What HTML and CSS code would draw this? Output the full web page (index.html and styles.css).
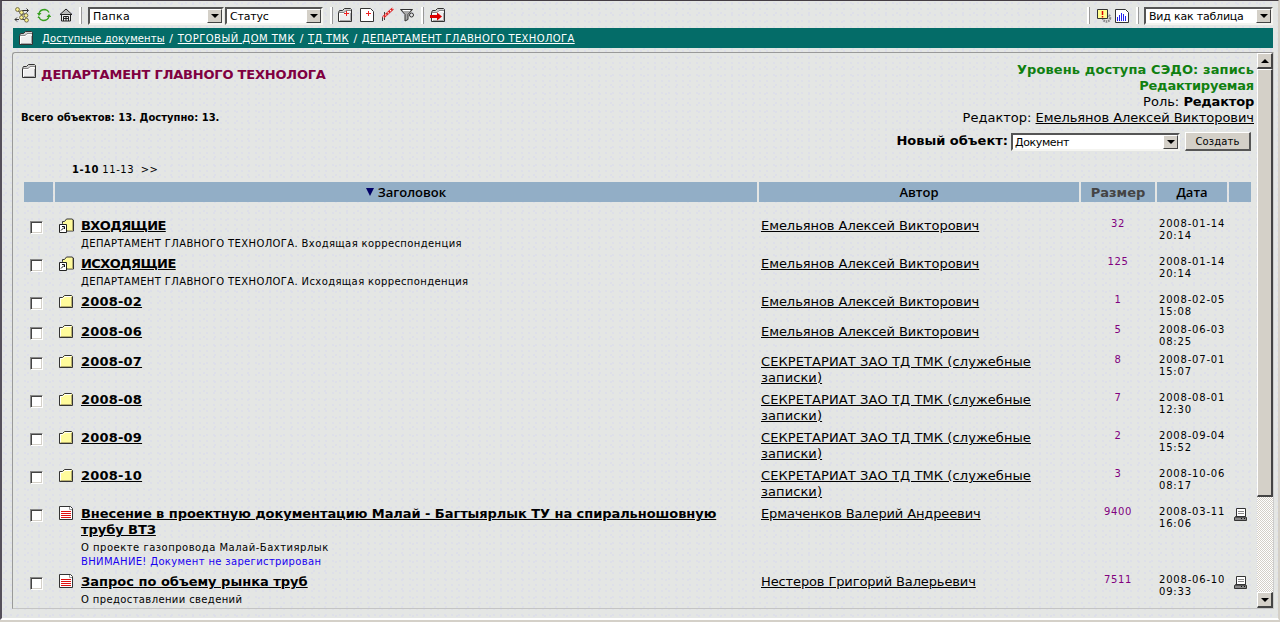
FILE: index.html
```html
<!DOCTYPE html>
<html lang="ru">
<head>
<meta charset="utf-8">
<title>ДЕПАРТАМЕНТ ГЛАВНОГО ТЕХНОЛОГА</title>
<link rel="stylesheet" href="styles.css">
</head>
<body>
<svg class="defs" width="0" height="0">
  <symbol id="folder" viewBox="0 0 15 15"><path d="M.5 3.500h3l2-2h7l1 1v11H.5z" fill="#fffb9c" stroke="#333"/><path d="M1.500 12.500v-8h2.500l2-2h6" fill="none" stroke="#fff"/><path d="M12.500 3v9.500h-11" fill="none" stroke="#b8b070"/></symbol>
  <symbol id="gfolder" viewBox="0 0 15 15"><path d="M.5 4.500l1-2h3l2-2h6l1 1v12H.5z" fill="#d0d0d0" stroke="#333"/><path d="M1 5.500h5.500l2-2H13V13H1z" fill="#eee"/><path d="M1 4.500h5l2-2h5" fill="none" stroke="#888"/><path d="M1.500 12.500v-7h5l2-2h4" fill="none" stroke="#fff"/><path d="M12.500 5v7.500H2" fill="none" stroke="#aaa"/></symbol>
  <symbol id="link" viewBox="0 0 15 15"><path d="M3.500 5.500v-2h2l2-2.500h5.500l1.500 1v11H3.500z" fill="#fffb9c" stroke="#333"/><path d="M13.500 2v10.500H9" fill="none" stroke="#b8b070"/><path d="M.5 6.500h7v8h-7z" fill="#fff" stroke="#222"/><path d="M2 12.500l3-3M3 8.500h2.500V11" fill="none" stroke="#111"/></symbol>
  <symbol id="doc" viewBox="0 0 15 15"><path d="M.5.5h11l2 2v11H.5z" fill="#fff" stroke="#333"/><path d="M2 5.500h10M2 7.500h10M2 9.500h10M2 11.500h10" stroke="#e01010"/><path d="M10.500 1v2.500H13" fill="none" stroke="#999"/></symbol>
  <symbol id="printer" viewBox="0 0 14 14"><path d="M2.500.5h9v8h-9z" fill="#fff" stroke="#333"/><path d="M4 3.500h6M4 5.500h6" stroke="#888"/><path d="M.5 9.500l1-1h10l1 1v3H.5z" fill="#888" stroke="#333"/><path d="M1 9.500h11" stroke="#555"/><path d="M7 10.500h1M10 10.500h1" stroke="#111"/></symbol>
</svg>
<div class="window">
  <div class="toolbar">
    <svg class="tree" width="16" height="16" viewBox="0 0 16 16"><path d="M8 3.500h6M12.500 1.500l2 2-2 2M5 12.500H1M3 10.500l-2 2 2 2M3 3l5 4-1 5M8 7h4M7 12l6 1" fill="none" stroke="#333"/><g fill="#fcf490" stroke="#665f40" stroke-width=".9"><circle cx="3.500" cy="2.500" r="1.900"/><circle cx="7.500" cy="5.500" r="1.900"/><circle cx="12" cy="8.500" r="1.900"/><circle cx="7.500" cy="10.500" r="1.900"/><circle cx="12.500" cy="13.200" r="1.900"/></g></svg>
    <svg class="refresh" width="14" height="14" viewBox="0 0 14 14"><path d="M2 5.500Q3 1.500 8 1.500q3 .5 4 3M12 8.500Q11 12.500 6 12.500q-3-.5-4-3" fill="none" stroke="#38a020" stroke-width="1.300"/><path d="M0 5h4.500L2 8zM9.500 9L12 6l2.500 3zM.5 10l1-2 2 2" fill="#38a020"/></svg>
    <svg class="home" width="12" height="14" viewBox="0 0 12 14"><path d="M1.500 6v7h9V6" fill="#eee" stroke="#222"/><path d="M0 6.500L6 1l6 5.500z" fill="#bbb" stroke="#222"/><path d="M3.500 13V8.500h5V13M6 8v5M3 10.500h6" fill="none" stroke="#222"/></svg>
    <i class="sep sep1"></i>
    <div class="select s-folder"><span>Папка</span><b></b></div>
    <div class="select s-status"><span>Статус</span><b></b></div>
    <i class="sep sep2"></i>
    <svg class="t-add" width="15" height="15"><use href="#gfolder" width="15" height="15"/><path d="M8.500 3v5M6 5.500h5" stroke="#e22"/></svg>
    <svg class="t-doc" width="14" height="15" viewBox="0 0 14 15"><path d="M.5.5h10l3 3v10H.5z" fill="#fff" stroke="#333"/><path d="M8.500 3v5M6 5.500h5" stroke="#e22"/></svg>
    <svg class="t-pen" width="14" height="15" viewBox="0 0 14 15"><path d="M3.500 5v8M1.500 10v4" stroke="#444"/><path d="M2 10.500L12 1.500" stroke="#d22" stroke-width="2.500"/><path d="M2 10.500L12 1.500" stroke="#fff" stroke-width="1.200" stroke-dasharray="1.200 2"/></svg>
    <svg class="t-fun" width="15" height="14" viewBox="0 0 15 14"><path d="M.5.500h12l-4.500 5v5l-3 1.500V5.500z" fill="#aaa" stroke="#333"/><path d="M3 1.500h7" stroke="#fff"/><circle cx="11.500" cy="6" r="2" fill="none" stroke="#333"/></svg>
    <i class="sep sep3"></i>
    <svg class="t-go" width="16" height="15"><use href="#gfolder" x="1" width="15" height="15"/><path d="M0 7h7V4.500l5 4-5 4V10H0z" fill="#d00"/></svg>
    <i class="sep sep4"></i>
    <svg class="t-warn" width="15" height="14" viewBox="0 0 15 14"><circle cx="9.500" cy="9" r="3.500" fill="none" stroke="#888" stroke-width="2.500" stroke-dasharray="1.500 .8"/><path d="M.5.500h10v9H.5z" fill="#ffff90" stroke="#333"/><path d="M5.500 2v4M5.500 7v1.500" stroke="#d00" stroke-width="1.500"/></svg>
    <svg class="t-chart" width="14" height="14" viewBox="0 0 14 14"><path d="M.5.5h10l3 3v10H.5z" fill="#fff" stroke="#333"/><path d="M2.500 8v4M4.500 6v6M6.500 4v8M8.500 5v7M10.500 7v5" stroke="#22e"/></svg>
    <i class="sep sep5"></i>
    <div class="select s-view"><span>Вид как таблица</span><b></b></div>
  </div>
  <div class="crumbs">
    <svg width="15" height="15"><use href="#gfolder" width="15" height="15"/></svg>
    <span class="c1">Доступные документы</span><em>/</em><span class="c2">ТОРГОВЫЙ ДОМ ТМК</span><em>/</em><span class="c3">ТД ТМК</span><em>/</em><span class="c4">ДЕПАРТАМЕНТ ГЛАВНОГО ТЕХНОЛОГА</span>
  </div>
  <div class="frame">
    <div class="content">
      <div class="head">
        <div class="left">
          <h1><svg width="15" height="15"><use href="#gfolder" width="15" height="15"/></svg><span>ДЕПАРТАМЕНТ ГЛАВНОГО ТЕХНОЛОГА</span></h1>
          <div class="total">Всего объектов: 13. Доступно: 13.</div>
          <div class="pager"><b>1-10</b> <span>11-13</span>&nbsp; <span>&gt;&gt;</span></div>
        </div>
        <div class="right">
          <div class="green g1">Уровень доступа СЭДО: запись</div>
          <div class="green g2">Редактируемая</div>
          <div>Роль: <b class="role">Редактор</b></div>
          <div>Редактор: <u>Емельянов Алексей Викторович</u></div>
          <div class="create"><b>Новый объект:</b><div class="select s-new"><span>Документ</span><b></b></div><div class="button">Создать</div></div>
        </div>
      </div>
      <div class="row thead"><div></div><div><i></i>Заголовок</div><div>Автор</div><div class="size">Размер</div><div>Дата</div><div></div></div>
      <div class="row"><div><i class="check"></i></div><div class="item"><svg width="15" height="15"><use href="#link" width="15" height="15"/></svg><div><a class="caps">ВХОДЯЩИЕ</a><p>ДЕПАРТАМЕНТ ГЛАВНОГО ТЕХНОЛОГА. Входящая корреспонденция</p></div></div><div class="author">Емельянов Алексей Викторович</div><div class="num">32</div><div class="date">2008-01-14<br>20:14</div><div></div></div>
      <div class="row"><div><i class="check"></i></div><div class="item"><svg width="15" height="15"><use href="#link" width="15" height="15"/></svg><div><a class="caps">ИСХОДЯЩИЕ</a><p>ДЕПАРТАМЕНТ ГЛАВНОГО ТЕХНОЛОГА. Исходящая корреспонденция</p></div></div><div class="author">Емельянов Алексей Викторович</div><div class="num">125</div><div class="date">2008-01-14<br>20:14</div><div></div></div>
      <div class="row"><div><i class="check"></i></div><div class="item"><svg width="15" height="15"><use href="#folder" width="15" height="15"/></svg><div><a class="month">2008-02</a></div></div><div class="author">Емельянов Алексей Викторович</div><div class="num">1</div><div class="date">2008-02-05<br>15:08</div><div></div></div>
      <div class="row"><div><i class="check"></i></div><div class="item"><svg width="15" height="15"><use href="#folder" width="15" height="15"/></svg><div><a class="month">2008-06</a></div></div><div class="author">Емельянов Алексей Викторович</div><div class="num">5</div><div class="date">2008-06-03<br>08:25</div><div></div></div>
      <div class="row"><div><i class="check"></i></div><div class="item"><svg width="15" height="15"><use href="#folder" width="15" height="15"/></svg><div><a class="month">2008-07</a></div></div><div class="author sec">СЕКРЕТАРИАТ ЗАО ТД ТМК (служебные<br>записки)</div><div class="num">8</div><div class="date">2008-07-01<br>15:07</div><div></div></div>
      <div class="row"><div><i class="check"></i></div><div class="item"><svg width="15" height="15"><use href="#folder" width="15" height="15"/></svg><div><a class="month">2008-08</a></div></div><div class="author sec">СЕКРЕТАРИАТ ЗАО ТД ТМК (служебные<br>записки)</div><div class="num">7</div><div class="date">2008-08-01<br>12:30</div><div></div></div>
      <div class="row"><div><i class="check"></i></div><div class="item"><svg width="15" height="15"><use href="#folder" width="15" height="15"/></svg><div><a class="month">2008-09</a></div></div><div class="author sec">СЕКРЕТАРИАТ ЗАО ТД ТМК (служебные<br>записки)</div><div class="num">2</div><div class="date">2008-09-04<br>15:52</div><div></div></div>
      <div class="row"><div><i class="check"></i></div><div class="item"><svg width="15" height="15"><use href="#folder" width="15" height="15"/></svg><div><a class="month">2008-10</a></div></div><div class="author sec">СЕКРЕТАРИАТ ЗАО ТД ТМК (служебные<br>записки)</div><div class="num">3</div><div class="date">2008-10-06<br>08:17</div><div></div></div>
      <div class="row"><div><i class="check"></i></div><div class="item"><svg width="15" height="15"><use href="#doc" width="15" height="15"/></svg><div><a class="long">Внесение в проектную документацию Малай - Багтыярлык ТУ на спиральношовную<br>трубу ВТЗ</a><p class="wide">О проекте газопровода Малай-Бахтиярлык<br><span class="blue">ВНИМАНИЕ! Документ не зарегистрирован</span></p></div></div><div class="author tight">Ермаченков Валерий Андреевич</div><div class="num">9400</div><div class="date">2008-03-11<br>16:06</div><div class="print"><svg width="14" height="14"><use href="#printer" width="14" height="14"/></svg></div></div>
      <div class="row"><div><i class="check"></i></div><div class="item"><svg width="15" height="15"><use href="#doc" width="15" height="15"/></svg><div><a>Запрос по объему рынка труб</a><p>О предоставлении сведений</p></div></div><div class="author tight">Нестеров Григорий Валерьевич</div><div class="num">7511</div><div class="date">2008-06-10<br>09:33</div><div class="print"><svg width="14" height="14"><use href="#printer" width="14" height="14"/></svg></div></div>
    </div>
    <div class="scroll"><div class="arrow up"></div><div class="thumb"></div><div class="track"></div><div class="arrow down"></div></div>
  </div>
</div>
</body>
</html>
```
FILE: styles.css
```css
* { box-sizing: border-box; }
body { margin: 0; width: 1280px; height: 622px; overflow: hidden; background: #d4d0c8; font: 13px/16px Verdana, "DejaVu Sans", sans-serif; color: #000; }
.defs { display: block; width: 0; height: 0; }
svg { flex: none; display: block; }
.window {
  width: 1279px; height: 620px; border: solid; border-width: 1px 1px 2px 2px; border-color: #443d44 #d4d0c8 #fff #55505a; padding-left: 11px;
  background:
    radial-gradient(circle at 2px 2px, #dcdeea 0 .6px, transparent 1px) 0 0 / 7px 6px,
    radial-gradient(circle at 4px 3px, #dcdeea 0 .6px, transparent 1px) 0 0 / 11px 9px,
    #e4e6e4;
}
.toolbar { display: flex; height: 27px; padding: 6px 0 0 1px; align-items: flex-start; }
.refresh { margin: 1px 0 0 7px; }
.home { margin: 1px 0 0 9px; }
.sep { width: 3px; height: 17px; background: #fff; border-right: 1px solid #999; }
.sep1 { margin: 0 6px 0 7px; }
.sep2 { margin: 0 5px 0 7px; }
.sep3 { margin: 0 6px 0 6px; }
.sep4 { margin-left: auto; }
.sep5 { margin: 0 5px 0 7px; }
.t-add { margin-top: 1px; }
.t-doc { margin: 1px 7px 0; }
.t-fun { margin: 2px 0 0 5px; }
.t-go { margin-top: 1px; }
.t-warn { margin: 2px 3px 0 7px; }
.t-chart { margin-top: 2px; }
.select { display: flex; height: 18px; border: 2px solid; border-color: #555 #f4f4f0 #f4f4f0 #555; background: #fff; font-size: 11px; line-height: 15px; font-weight: normal; white-space: nowrap; }
.select span { flex: 1; padding-left: 3px; }
.select b { width: 15px; height: 14px; background: #d4d0c8; border: 1px solid; border-color: #fff #444 #444 #fff; }
.select b::before { content: ""; display: block; margin: 4px auto 0; width: 0; border: 4px solid transparent; border-top-color: #000; border-bottom: 0; }
.s-folder { width: 136px; margin-right: 1px; letter-spacing: .3px; }
.s-status { width: 98px; letter-spacing: -.2px; }
.s-view { width: 129px; margin-right: 5px; letter-spacing: -.2px; }
.crumbs { display: flex; width: 1260px; height: 20px; padding: 2px 0 0 6px; background: #046c68; color: #fff; font-size: 10px; white-space: nowrap; }
.crumbs svg { margin: 1px 8px 0 0; }
.crumbs span { text-decoration: underline; line-height: 17px; }
.crumbs em { font-style: normal; font-size: 11px; width: 13px; text-align: center; line-height: 17px; }
.c1 { letter-spacing: .12px; }
.c2 { letter-spacing: .48px; }
.c3 { letter-spacing: .3px; }
.c4 { letter-spacing: .36px; }
.frame { display: flex; width: 1262px; height: 557px; margin: 4px 0 0 -1px; border: solid; border-width: 1px; border-color: #999 #ccc #c4c4c4 #999; border-radius: 3px 0 0 0; overflow: hidden; }
.content { width: 1244px; padding-left: 11px; }
.head { display: flex; justify-content: space-between; height: 129px; white-space: nowrap; }
h1 { display: flex; margin: 0; padding-top: 11px; height: 40px; font-size: 13px; line-height: 21px; letter-spacing: -.2px; color: #800040; }
h1 svg { margin: 0 4px 0 -2px; }
.total { height: 50px; margin-left: -3px; padding-top: 17px; font-size: 10px; font-weight: bold; }
.pager { margin-left: 48px; padding-top: 19px; font-size: 10px; }
.pager span { letter-spacing: .6px; }
.pager b { letter-spacing: .5px; }
.right { text-align: right; padding: 9px 0 0; margin-right: 3px; }
.green { color: #108010; font-weight: bold; }
.g1 { letter-spacing: .1px; }
.g2 { letter-spacing: -.2px; }
.role { letter-spacing: -.2px; }
.right u { letter-spacing: -.04px; }
.create { display: flex; justify-content: flex-end; margin: 6px 3px 0 0; }
.create > b { margin: 1px 3px 0 0; }
.s-new { width: 169px; text-align: left; margin-top: 1px; letter-spacing: -.4px; }
.s-new span { padding-left: 2px; }
.button { width: 66px; height: 19px; margin-left: 5px; background: #d4d0c8; border: solid; border-width: 1px 2px 2px 1px; border-color: #fff #555 #555 #fff; font-size: 10px; letter-spacing: .15px; line-height: 17px; text-align: center; }
.row { display: grid; grid-template-columns: 29px 702px 320px 74px 70px 22px; column-gap: 2px; padding-bottom: 6px; white-space: nowrap; }
.thead { height: 20px; padding: 0; margin-bottom: 16px; text-align: center; line-height: 20px; font-family: "Open Sans", sans-serif; font-weight: 600; }
.thead div { height: 20px; background: #92aec6; }
.thead i { display: inline-block; margin: 0 4px 1px 0; width: 0; border: 4px solid transparent; border-top: 8px solid #006; border-bottom: 0; }
.thead .size { font: bold 13px/21px "DejaVu Sans", sans-serif; color: #444; }
.check { display: block; width: 13px; height: 13px; margin: 3px 0 0 6px; background: #fff; border: 1px solid; border-color: #888 #fff #fff #888; box-shadow: inset 1px 1px #444, inset -1px -1px #d4d0c8; }
.item { display: flex; padding-left: 4px; gap: 7px; }
.item a { display: block; font-weight: bold; text-decoration: underline; text-underline-offset: 1px; }
.item .caps { letter-spacing: -.6px; }
.item .month { width: max-content; letter-spacing: .2px; }
.item .long { letter-spacing: -.06px; }
.item p { margin: 3px 0 -1px; font-size: 10px; line-height: 14px; letter-spacing: .38px; }
.item .wide { letter-spacing: .5px; }
.item .blue { color: #1800f0; letter-spacing: .34px; }
.author { padding-left: 2px; text-decoration: underline; text-underline-offset: 1px; letter-spacing: -.05px; }
.sec { letter-spacing: .09px; }
.tight { letter-spacing: -.12px; }
.num { text-align: center; font-size: 10px; line-height: 12px; letter-spacing: .6px; color: #800080; }
.date { padding-left: 2px; font-size: 10px; line-height: 12px; letter-spacing: .8px; }
.print { padding: 2px 0 0 5px; }
.scroll { display: flex; flex-direction: column; width: 16px; }
.arrow, .thumb { background: #d4d0c8; border: solid; border-width: 1px 2px 2px 1px; border-color: #fff #444 #444 #fff; }
.arrow { height: 16px; padding: 5px 0 0 3px; }
.arrow::before { content: ""; display: block; width: 0; border: 4px solid transparent; }
.arrow.up::before { border-bottom-color: #000; border-top: 0; }
.arrow.down::before { border-top-color: #000; border-bottom: 0; }
.thumb { height: 428px; }
.track { flex: 1; background: repeating-conic-gradient(#fff 0 25%, #d4d0c8 0 50%) 0 0 / 2px 2px; }
```
